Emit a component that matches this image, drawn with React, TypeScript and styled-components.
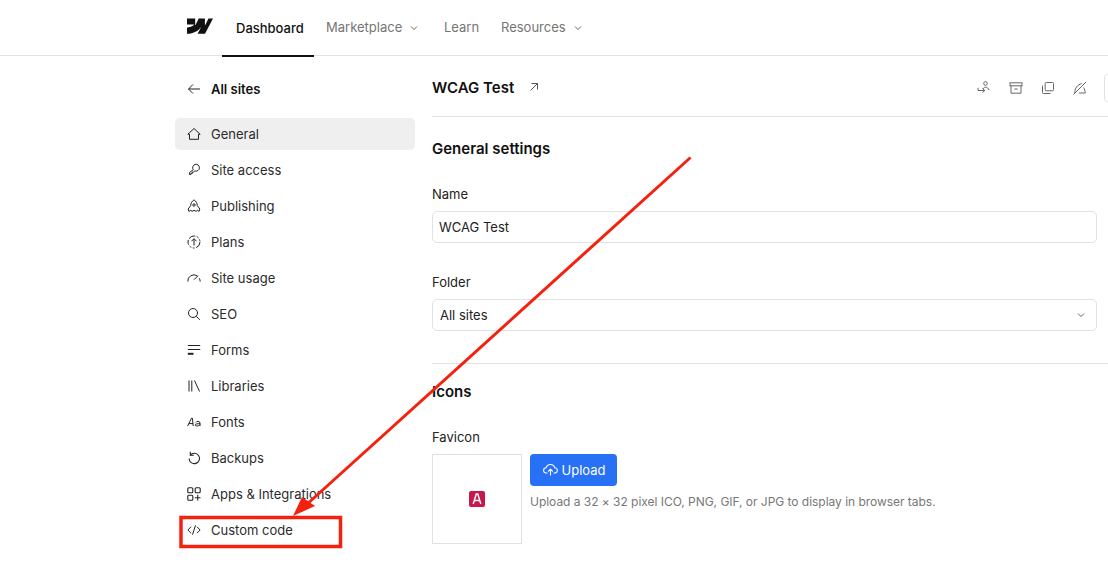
import React from "react";
import styled, { createGlobalStyle } from "styled-components";

const Global = createGlobalStyle`
  html, body { margin: 0; padding: 0; background: #fff; height: 100%; overflow: hidden; }
  body { font-family: Inter, "Liberation Sans", sans-serif; font-size: 13px; color: #1e1e1e; }
`;
const Page = styled.div`
  position: relative;
  width: 1108px;
  height: 562px;
  overflow: hidden;
  background: #fff;
`;
const Header = styled.header`
  height: 55px;
  border-bottom: 1px solid #e2e2e2;
  padding-left: 187px;
  display: flex;
  align-items: stretch;
`;
const Logo = styled.svg`
  width: 26px;
  height: 16px;
  margin-top: 18px;
  margin-right: 9px;
`;
const Tab = styled.div<{ $active?: boolean; $w: number }>`
  width: ${(p) => p.$w}px;
  height: ${(p) => (p.$active ? 57 : 55)}px;
  box-sizing: border-box;
  display: flex;
  align-items: center;
  gap: 7px;
  padding-bottom: ${(p) => (p.$active ? 0 : 1)}px;
  padding-left: ${(p) => (p.$active ? 14 : 12)}px;
  font-size: 13px;
  font-weight: ${(p) => (p.$active ? 500 : 400)};
  color: ${(p) => (p.$active ? "#111" : "#757575")};
  border-bottom: ${(p) => (p.$active ? "2px solid #111" : "none")};
  svg { width: 10px; height: 10px; margin-top: 1px; flex: none; }
`;
const Body = styled.div`
  display: flex;
  padding-left: 175px;
  gap: 17px;
`;
const Sidebar = styled.nav`
  width: 240px;
  flex: none;
  display: flex;
  flex-direction: column;
  padding-top: 16px;
`;
const Back = styled.div`
  height: 32px;
  box-sizing: border-box;
  padding: 2px 0 0 12px;
  margin-bottom: 14px;
  display: flex;
  align-items: center;
  gap: 10px;
  font-weight: 600;
  font-size: 13px;
  color: #111;
`;
const Item = styled.div<{ $active?: boolean }>`
  height: 32px;
  margin-bottom: 4px;
  padding-left: 12px;
  display: flex;
  align-items: center;
  gap: 10px;
  border-radius: 5px;
  background: ${(p) => (p.$active ? "#efefef" : "transparent")};
  color: #2b2b2b;
  font-size: 13px;
  svg { flex: none; }
`;
const Main = styled.main`
  flex: 1;
  min-width: 0;
  padding-top: 16px;
`;
const TitleRow = styled.div`
  width: 700px;
  height: 44px;
  border-bottom: 1px solid #e2e2e2;
  display: flex;
  align-items: flex-start;
`;
const Title = styled.h1`
  margin: 0;
  padding-top: 6px;
  font-size: 15px;
  line-height: 20px;
  font-weight: 600;
  color: #111;
`;
const TitleLink = styled.span`
  margin: 10px 0 0 15px;
  line-height: 0;
`;
const Actions = styled.div`
  margin-left: auto;
  display: flex;
  gap: 16px;
  align-items: flex-start;
  padding-top: 8px;
  color: #555;
`;
const Stub = styled.div`
  width: 28px;
  height: 30px;
  margin-top: -7px;
  box-sizing: border-box;
  border: 1px solid #e2e2e2;
  border-radius: 5px;
`;
const Column = styled.div`
  width: 665px;
`;
const SectionTitle = styled.h2<{ $top: number }>`
  margin: ${(p) => p.$top}px 0 0;
  font-size: 15px;
  line-height: 20px;
  font-weight: 600;
  color: #111;
`;
const Label = styled.div<{ $top: number }>`
  margin-top: ${(p) => p.$top}px;
  font-size: 13px;
  line-height: 18px;
  color: #222;
`;
const Field = styled.div<{ $pad: number }>`
  margin-top: 8px;
  height: 32px;
  box-sizing: border-box;
  border: 1px solid #e2e2e2;
  border-radius: 5px;
  padding: 0 10px 0 ${(p) => p.$pad}px;
  display: flex;
  align-items: center;
  justify-content: space-between;
  font-size: 13px;
  color: #222;
`;
const Rule = styled.hr`
  margin: 32px 0 0;
  width: 700px;
  border: 0;
  border-top: 1px solid #e2e2e2;
`;
const FaviconRow = styled.div`
  margin-top: 8px;
  display: flex;
  gap: 8px;
`;
const FaviconBox = styled.div`
  width: 90px;
  height: 90px;
  box-sizing: border-box;
  border: 1px solid #e2e2e2;
  display: flex;
  align-items: center;
  justify-content: center;
`;
const UploadColumn = styled.div`
  display: flex;
  flex-direction: column;
  align-items: flex-start;
  gap: 8px;
`;
const UploadButton = styled.button`
  width: 87px;
  height: 32px;
  padding: 0 0 0 1px;
  border: 0;
  border-radius: 4px;
  background: #2671f6;
  color: #fff;
  font: 400 13px Inter, sans-serif;
  display: flex;
  align-items: center;
  justify-content: center;
  gap: 4px;
`;
const Hint = styled.div`
  font-size: 12px;
  line-height: 16px;
  color: #777;
  letter-spacing: -0.03px;
`;
const Annotation = styled.svg`
  position: absolute;
  inset: 0;
  width: 1108px;
  height: 562px;
  pointer-events: none;
`;

const s = { width: 14, height: 14, viewBox: "0 0 14 14", fill: "none", stroke: "#222", strokeWidth: 1 } as const;
const a = { width: 16, height: 16, viewBox: "-1 -1 16 16", fill: "none", stroke: "#666", strokeWidth: 1 } as const;

const icons: Record<string, React.ReactNode> = {
  General: <svg {...s}><path d="M.8 7.300 7 1.500l6.200 5.800h-1.700v5h-9v-5z" /></svg>,
  "Site access": <svg {...s}><path d="M6 7.200a3.400 3.400 0 1 1 1.600 1.200l-1.200 1.100H5v1.400H3.600V12H2.100v-1.900z" transform="translate(0.300 -0.500)" /></svg>,
  Publishing: <svg {...s}><path d="M7 .8c2 1.400 3.300 3.500 3.300 5.800l2.500 3.400-.7 2.400-1.800-1.100-1.200 1.100L7 11.300l-2 1.100-1.200-1.100-1.900 1.100-.7-2.400 2.500-3.400C3.700 4.300 5 2.200 7 .8z" /><circle cx="7" cy="6" r="1.200" /></svg>,
  Plans: <svg {...s}><circle cx="7" cy="7" r="6" strokeDasharray="7 1.500 2 1.500 2 1.500 5 1.500" /><path d="M7 10.500V3.800M4.500 6.200 7 3.700l2.500 2.500" /></svg>,
  "Site usage": <svg {...s}><path d="M.8 10.500a6.200 6.200 0 0 1 9.500-5.700M12.300 7.300c.5 1 .9 2.100.9 3.200M7 8.700 11 4.700" /></svg>,
  SEO: <svg {...s}><circle cx="6" cy="6" r="4.500" /><path d="m9.300 9.300 3.500 3.500" /></svg>,
  Forms: <svg {...s} strokeWidth={1.200}><path d="M.8 2.500h12.400M.8 6.500h12.400" /><path d="M.8 10.800h5.700" strokeWidth={2} /></svg>,
  Libraries: <svg {...s}><path d="M2 1.500v11M4.800 1.500v11M7.500 1.500l5 11" /></svg>,
  Fonts: <svg {...s} strokeWidth={1}><path d="M.6 11 4.500 3.200h.9L6.200 11M2 8.600h4" /><path d="M13 11V8c0-2.100-3.600-2.100-4.100-.5M13 8.700c-2.500 0-4.800.1-4.800 1.300s3.600 1.500 4.800-.3" /></svg>,
  Backups: <svg {...s} strokeWidth={1.100}><path d="M3.200 4.200a5.200 5.200 0 1 1-1.100 3.200" /><path d="M3.300.7v3.600h3.500" /></svg>,
  "Apps & Integrations": <svg {...s} strokeWidth={1.100}><rect x=".8" y=".8" width="5" height="5" rx="1" /><rect x="8.200" y=".8" width="5" height="5" rx="1" /><rect x=".8" y="8.200" width="5" height="5" rx="1" /><path d="M10.700 7.800v5.700M7.800 10.700h5.700" /></svg>,
  "Custom code": <svg {...s}><path d="M4 3.800.9 7 4 10.200M10 3.800 13.100 7 10 10.200M8.500 2.300 5.500 11.700" /></svg>,
};

const Chevron = () => (
  <svg viewBox="0 0 10 10" fill="none" stroke="#666" strokeWidth="1"><path d="m2 3.500 3 3 3-3" /></svg>
);

const items = Object.keys(icons);

export default function App() {
  return (
    <Page>
      <Global />
      <Header>
        <Logo viewBox="0 0 26 16">
          <path fill="#111" d="M26 .5 18 15.800h-7.400l3.300-6.400h-.2C11 13 7.200 15.300 0 15.800V9.500s4.600-.3 7.300-3.100H0V.5h8.200v6.700h.2L11.700.500h6.200v6.700h.2L21.500.5z" />
        </Logo>
        <Tab $active $w={92}>Dashboard</Tab>
        <Tab $w={118}>Marketplace <Chevron /></Tab>
        <Tab $w={57}>Learn</Tab>
        <Tab $w={104}>Resources <Chevron /></Tab>
      </Header>
      <Body>
        <Sidebar>
          <Back>
            <svg {...s}><path d="M13 7H1.500M6 2.500 1.500 7 6 11.500" /></svg>
            All sites
          </Back>
          {items.map((name) => (
            <Item key={name} $active={name === "General"}>
              {icons[name]}
              {name}
            </Item>
          ))}
        </Sidebar>
        <Main>
          <TitleRow>
            <Title>WCAG Test</Title>
            <TitleLink>
              <svg width="10" height="10" viewBox="0 0 10 10" fill="none" stroke="#555" strokeWidth="1"><path d="M1.500 8.500 8.500 1.500M2.500 1.500h6v6" /></svg>
            </TitleLink>
            <Actions>
              <svg {...a}><circle cx="8.500" cy="2.500" r="1.800" /><path d="M6 8c.5-1.200 1.500-1.800 2.500-1.800 1.500 0 3 1 3.500 2.800M1 6.800v2.700h7M5.500 7.500l2.300 2-2.300 2" /></svg>
              <svg {...a}><rect x="1" y="1.800" width="12" height="3" /><path d="M2 4.800v7.400h10V4.800M5.300 8h3.400" /></svg>
              <svg {...a}><rect x="4.200" y="1.500" width="8.300" height="8.300" rx="1" /><path d="M1.500 4.500v7a1 1 0 0 0 1 1h7" /></svg>
              <svg {...a}><path d="M.5 13.500 13 1M1.800 12c0-5 2.500-8 7-9.500M12.200 12H6M10.500 6.500c1 1.500 1.700 3.500 1.700 5.500" /></svg>
              <Stub />
            </Actions>
          </TitleRow>
          <Column>
            <SectionTitle $top={22}>General settings</SectionTitle>
            <Label $top={26}>Name</Label>
            <Field $pad={6}>WCAG Test</Field>
            <Label $top={30}>Folder</Label>
            <Field $pad={7}>
              All sites
              <svg width="10" height="10" viewBox="0 0 10 10" fill="none" stroke="#666" strokeWidth="1"><path d="m2 3.500 3 3 3-3" /></svg>
            </Field>
            <Rule />
            <SectionTitle $top={18}>Icons</SectionTitle>
            <Label $top={26}>Favicon</Label>
            <FaviconRow>
              <FaviconBox>
                <svg width="16" height="16" viewBox="0 0 16 16">
                  <rect width="16" height="16" rx="2" fill="#c8174d" />
                  <path d="M4.200 13 7.300 3h1.500l3 10M5.600 9.500h4.800" fill="none" stroke="#fff" strokeWidth="1.400" />
                </svg>
              </FaviconBox>
              <UploadColumn>
                <UploadButton>
                  <svg width="15" height="14" viewBox="0 0 15 14" fill="none" stroke="#fff" strokeWidth="1.100"><path d="M4.500 10H3.300a2.600 2.600 0 0 1-.2-5.200 4.500 4.500 0 0 1 8.700 0 2.600 2.600 0 0 1-.1 5.200h-1.200M7.500 12.500V6.500M5.200 8.500 7.500 6.200l2.300 2.300" /></svg>
                  Upload
                </UploadButton>
                <Hint>Upload a 32 × 32 pixel ICO, PNG, GIF, or JPG to display in browser tabs.</Hint>
              </UploadColumn>
            </FaviconRow>
          </Column>
        </Main>
      </Body>
      <Annotation viewBox="0 0 1108 562">
        <path d="M690.500 157.500 305 506" stroke="#f5210f" strokeWidth="3" fill="none" />
        <path d="M293 516 302 497 315 506z" fill="#f5210f" />
        <rect x="181" y="517.500" width="159.500" height="29" fill="none" stroke="#f5210f" strokeWidth="3.500" />
      </Annotation>
    </Page>
  );
}
